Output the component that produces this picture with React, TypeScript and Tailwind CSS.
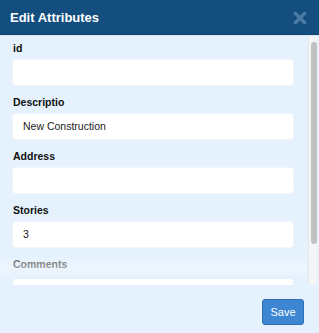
import React from 'react'

const fields = [
  { label: 'id', value: '' },
  { label: 'Descriptio', value: 'New Construction' },
  { label: 'Address', value: '' },
  { label: 'Stories', value: '3' },
]

export default function App() {
  return (
    <div
      className="w-[319px] h-[333px] bg-[#e5f1fd] flex flex-col overflow-hidden"
      style={{ fontFamily: '"Liberation Sans", Arial, sans-serif' }}
    >
      {/* header */}
      <div className="h-[35px] shrink-0 bg-[#134e7e] flex items-center justify-between pl-[10px] pr-[12px] border-b border-[#0f446f]">
        <span className="text-[13px] font-bold text-white leading-none pt-[1px]">Edit Attributes</span>
        <svg width="14" height="14" viewBox="0 0 14 14" className="mt-[1px]">
          <path d="M2.5 2.5 L11.5 11.5 M11.5 2.5 L2.5 11.5" stroke="#4a79a1" strokeWidth="3.6" strokeLinecap="round" />
        </svg>
      </div>
      <div className="h-[1px] shrink-0 bg-[#d8e8f7]" />

      {/* scroll area */}
      <div className="relative h-[249px] shrink-0 overflow-hidden">
        <div className="pt-[6px] pl-[13px] pr-[26px]">
          {fields.map((f) => (
            <div key={f.label} className="mb-[11px]">
              <div className="text-[10.5px] leading-[13px] font-bold text-[#111] mb-[5px]">{f.label}</div>
              <div className="h-[25px] bg-white rounded-[3px] flex items-center pl-[10px] text-[10.5px] text-[#222] shadow-[0_0_0_1px_#f1f5f9]">
                {f.value}
              </div>
            </div>
          ))}
          <div className="text-[10.5px] leading-[13px] font-bold text-[#5c5f63] mt-[2px]">Comments</div>
          <div className="h-[25px] bg-white rounded-[3px] mt-[8px]" />
        </div>
        <div className="absolute left-0 right-[12px] top-[220px] h-[22px] bg-gradient-to-b from-white/0 via-white/35 to-white/0" />

        {/* scrollbar */}
        <div className="absolute right-[2px] top-0 bottom-0 w-[9px] bg-[#f3f5f7] border-l border-[#e3e6ea]">
          <div className="absolute left-[2px] right-0 top-[6px] h-[202px] rounded-full bg-[#c1c1c1]" />
        </div>
      </div>

      {/* footer */}
      <div className="flex justify-end pr-[15px] pt-[14px]">
        <button className="w-[42px] h-[26px] rounded-[3px] bg-[#3d86d2] border border-[#2e6fb4] text-white text-[11px] leading-none">
          Save
        </button>
      </div>
    </div>
  )
}
